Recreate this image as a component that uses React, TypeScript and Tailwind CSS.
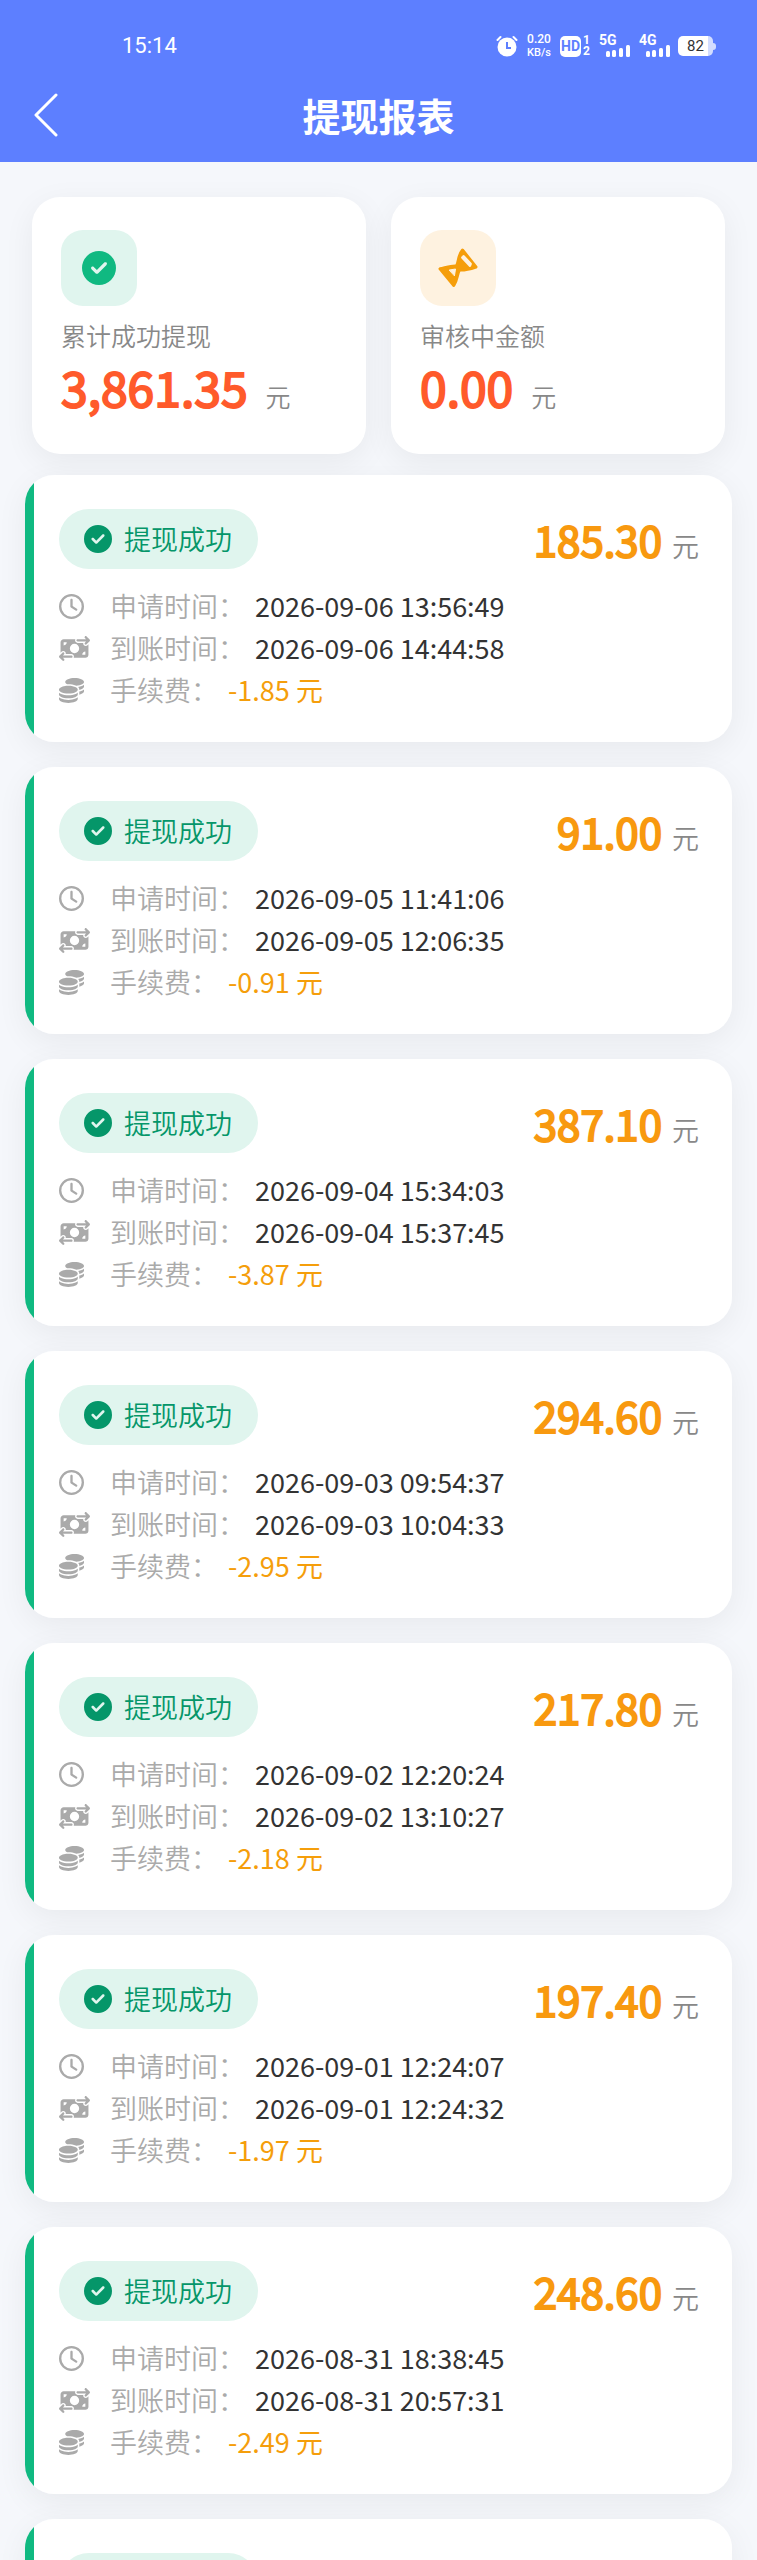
import { FaCircleCheck, FaCoins, FaMoneyBillTransfer, FaRegClock } from "react-icons/fa6";

const records = [
  { amount: "185.30", applied: "2026-09-06 13:56:49", received: "2026-09-06 14:44:58", fee: "-1.85" },
  { amount: "91.00", applied: "2026-09-05 11:41:06", received: "2026-09-05 12:06:35", fee: "-0.91" },
  { amount: "387.10", applied: "2026-09-04 15:34:03", received: "2026-09-04 15:37:45", fee: "-3.87" },
  { amount: "294.60", applied: "2026-09-03 09:54:37", received: "2026-09-03 10:04:33", fee: "-2.95" },
  { amount: "217.80", applied: "2026-09-02 12:20:24", received: "2026-09-02 13:10:27", fee: "-2.18" },
  { amount: "197.40", applied: "2026-09-01 12:24:07", received: "2026-09-01 12:24:32", fee: "-1.97" },
  { amount: "248.60", applied: "2026-08-31 18:38:45", received: "2026-08-31 20:57:31", fee: "-2.49" },
];

function AlarmIcon() {
  return (
    <svg viewBox="0 0 22 22" className="h-[22px] w-[22px]" fill="none" stroke="#fff">
      <circle cx="11" cy="12" r="9.5" fill="#fff" stroke="none" />
      <path d="M1.500 5 4.500 2M20.500 5 17.500 2" strokeWidth="2" strokeLinecap="round" />
      <path d="M11 7v6h4" stroke="#5d7fff" strokeWidth="2" />
    </svg>
  );
}

function Signal({ label }: { label: string }) {
  return (
    <div className="flex w-8 flex-col">
      <span className="text-[14px] leading-[11px] font-bold">{label}</span>
      <svg viewBox="0 0 32 12" className="-mt-px h-3 w-8" fill="#fff">
        <rect x="7" y="6" width="4" height="6" rx="1.5" />
        <rect x="13" y="5" width="4" height="7" rx="1.5" />
        <rect x="20" y="3" width="4" height="9" rx="1.5" />
        <rect x="27" y="0" width="4" height="12" rx="1.5" />
      </svg>
    </div>
  );
}

function StatusBar() {
  return (
    <div className="flex items-center justify-between pt-8 pr-[41px] pl-[122px] font-['Roboto',sans-serif] text-white">
      <span className="text-[22px] leading-7">15:14</span>
      <div className="flex items-center">
        <AlarmIcon />
        <div className="ml-2 flex w-[26px] flex-col items-center text-[12px] leading-[13px] font-medium">
          <span>0.20</span>
          <span className="text-[11px]">KB/s</span>
        </div>
        <div className="ml-2 flex h-[21px] w-[21px] items-center justify-center rounded-[5px] bg-white text-[14px] font-bold text-[#5d7fff]">
          HD
        </div>
        <div className="ml-0.5 flex w-2 flex-col text-[12px] leading-[11px] font-bold">
          <span>1</span>
          <span>2</span>
        </div>
        <div className="ml-2 flex gap-2">
          <Signal label="5G" />
          <Signal label="4G" />
        </div>
        <div className="ml-[7px] flex items-center">
          <div className="flex h-5 w-[35px] items-center justify-center rounded-[5px] bg-linear-to-r from-white from-85% to-[#d3ddff] to-85% text-[15px] text-[#333]">
            82
          </div>
          <div className="h-[7px] w-[3px] rounded-r-full bg-[#d3ddff]" />
        </div>
      </div>
    </div>
  );
}

function HourglassIcon() {
  return (
    <svg viewBox="0 0 40 40" className="h-10 w-10" strokeLinecap="round" strokeLinejoin="round">
      <path
        d="M24.500 2 38 19C32 21 27 22.500 21.500 22C19 26 19.500 32 15.800 37.500L2 20.800C8 19.500 13 17.500 18.500 18C21 13 20 7 24.500 2Z"
        fill="#f59e0b"
        stroke="#f59e0b"
        strokeWidth="3"
      />
      <path d="M24.500 9.500 32 17.500M25.500 8.500 32.500 16" fill="none" stroke="#fef2e0" strokeWidth="2.800" />
      <path d="M11.500 22 17.500 21 16.500 27.500Z" fill="#fef2e0" stroke="#fef2e0" strokeWidth="1" />
    </svg>
  );
}

function StatCard({ icon, tint, label, value }: { icon: React.ReactNode; tint: string; label: string; value: string }) {
  return (
    <div className="flex-1 rounded-[28px] bg-white px-[29px] pt-[33px] pb-6 shadow-[0_8px_32px_rgba(0,0,0,0.06)]">
      <div className={`flex h-[76px] w-[76px] items-center justify-center rounded-[22px] ${tint}`}>{icon}</div>
      <div className="mt-3 text-[25px] leading-[34px] font-[350] text-[#888]">{label}</div>
      <div className="flex items-baseline gap-[18px] leading-[68px]">
        <span className="text-[48px] text-[#ff5a2b] [-webkit-text-stroke:2px]">{value}</span>
        <span className="text-[25px] font-[350] text-[#888]">元</span>
      </div>
    </div>
  );
}

function RecordShell({ children }: { children: React.ReactNode }) {
  return (
    <li className="rounded-[29px] shadow-[0_8px_32px_rgba(0,0,0,0.06)]">
      <div className="min-h-[267px] overflow-hidden rounded-[29px] bg-linear-to-r from-[#10b981] from-[9px] to-white to-[9px] pt-[34px] pr-[33px] pl-[34px]">
        {children}
      </div>
    </li>
  );
}

function RecordCard({ record }: { record: (typeof records)[number] }) {
  return (
    <RecordShell>
      <div className="flex h-[60px] items-center justify-between">
        <div className="flex h-full items-center gap-3 rounded-full bg-[#e0f5ee] pr-[26px] pl-[25px] text-[27px] font-[350] text-[#059669]">
          <FaCircleCheck className="h-7 w-7" />
          提现成功
        </div>
        <div className="flex items-baseline gap-[10px]">
          <span className="text-[42px] leading-[60px] text-[#f8990f] [-webkit-text-stroke:2px]">{record.amount}</span>
          <span className="text-[27px] font-[350] text-[#888]">元</span>
        </div>
      </div>
      <dl className="mt-4 text-[27px] leading-[42px] text-[#aaa]">
        <div className="flex items-center">
          <FaRegClock className="mr-[26px] h-[25px] w-[25px]" />
          <dt className="font-[350]">申请时间：</dt>
          <dd className="ml-[10px] text-[#333]">{record.applied}</dd>
        </div>
        <div className="flex items-center">
          <FaMoneyBillTransfer className="mr-[20px] h-[25px] w-[31px]" />
          <dt className="font-[350]">到账时间：</dt>
          <dd className="ml-[10px] text-[#333]">{record.received}</dd>
        </div>
        <div className="flex items-center">
          <FaCoins className="mr-[26px] h-[25px] w-[25px]" />
          <dt className="font-[350]">手续费：</dt>
          <dd className="ml-[10px] text-[#f59e0b]">{record.fee} 元</dd>
        </div>
      </dl>
    </RecordShell>
  );
}

export default function App() {
  return (
    <div className="h-screen overflow-hidden bg-[#f5f7fb] font-['Noto_Sans_CJK_SC',sans-serif]">
      <header className="bg-[#5d7fff] pb-[17px]">
        <StatusBar />
        <div className="flex items-center px-[34px] pt-[25px] text-white">
          <a href="#" aria-label="返回" className="w-10">
            <svg viewBox="0 0 24 44" className="h-11 w-6" fill="none" stroke="currentColor" strokeWidth="3" strokeLinecap="round" strokeLinejoin="round">
              <path d="M22 2 2 22l20 20" />
            </svg>
          </a>
          <h1 className="flex-1 text-center text-[38px] leading-[60px] font-bold">提现报表</h1>
          <div className="w-10" />
        </div>
      </header>
      <main>
        <section className="flex gap-[25px] px-8 pt-[35px]">
          <StatCard
            icon={<FaCircleCheck className="h-[34px] w-[34px] text-[#10b981]" />}
            tint="bg-[#e0f5ee]"
            label="累计成功提现"
            value="3,861.35"
          />
          <StatCard icon={<HourglassIcon />} tint="bg-[#fef2e0]" label="审核中金额" value="0.00" />
        </section>
        <ul className="mt-[21px] flex flex-col gap-[25px] px-[25px]">
          {records.map((record) => (
            <RecordCard key={record.applied} record={record} />
          ))}
          <RecordShell>
            <div className="h-[60px] w-[199px] rounded-full bg-[#e0f5ee]" />
          </RecordShell>
        </ul>
      </main>
    </div>
  );
}
